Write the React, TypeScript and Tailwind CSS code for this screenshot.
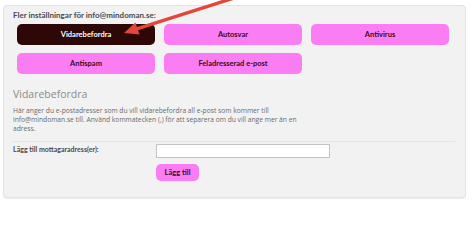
import React from "react";

const pink = "bg-[#fb7df3] text-[#3a0a22]";

function Tab({ label, active }: { label: string; active?: boolean }) {
  return (
    <button
      className={
        "h-[21px] rounded-[5px] text-[7.5px] font-bold flex items-center justify-center " +
        (active ? "bg-[#2e0707] text-white" : pink)
      }
    >
      {label}
    </button>
  );
}

export default function App() {
  return (
    <div className="relative w-[474px] h-[207px] bg-white font-['Lato',sans-serif] overflow-hidden">
      <div className="ml-[3px] mt-[5px] w-[463px] h-[193px] rounded-[4px] border border-[#e3e3e3] bg-[#f2f2f2] shadow-[0_1px_1px_rgba(0,0,0,0.08)]">
        <div className="pl-[9px] pt-[4px] text-[8px] font-bold text-[#4a4a4a] leading-[10px]">
          Fler inställningar för info@mindoman.se:
        </div>
        <div className="mt-[4px] ml-[13px] grid grid-cols-[138px_138px_138px] gap-x-[9px] gap-y-[8px]">
          <Tab label="Vidarebefordra" active />
          <Tab label="Autosvar" />
          <Tab label="Antivirus" />
          <Tab label="Antispam" />
          <Tab label="Feladresserad e-post" />
        </div>

        <div className="mt-[13px] pl-[9px] pr-[9px]">
          <div className="text-[10.5px] text-[#8c8c8c] leading-[14px] font-['Open_Sans',sans-serif]">
            Vidarebefordra
          </div>
          <p className="mt-[5px] text-[6.7px] leading-[9px] text-[#6b6b6b] font-['Open_Sans',sans-serif] w-[290px]">
            Här anger du e-postadresser som du vill vidarebefordra all e-post som kommer till
            info@mindoman.se till. Använd kommatecken (,) för att separera om du vill ange mer än en
            adress.
          </p>
          <div className="mt-[8px] border-t border-[#e4e4e4] mr-[1px]" />
          <div className="mt-[2px] flex items-start">
            <div className="w-[143px] pt-[1px] text-[7px] font-bold text-[#4a4a4a] leading-[9px]">
              Lägg till mottagaradress(er):
            </div>
            <div className="flex flex-col gap-[6px]">
              <input className="w-[174px] h-[14px] bg-white border border-[#c4c4c4] outline-none" />
              <button className={"w-[43px] h-[17px] rounded-[5px] text-[7.5px] font-bold " + pink}>
                Lägg till
              </button>
            </div>
          </div>
        </div>
      </div>

      <svg className="absolute left-0 top-0" width="474" height="207" viewBox="0 0 474 207">
        <line x1="136" y1="29.2" x2="232" y2="-1.3" stroke="#e2473a" strokeWidth="3.5" strokeLinecap="round" />
        <polygon points="124,33 139.6,34.6 135.4,22.4" fill="#e2473a" />
      </svg>
    </div>
  );
}
